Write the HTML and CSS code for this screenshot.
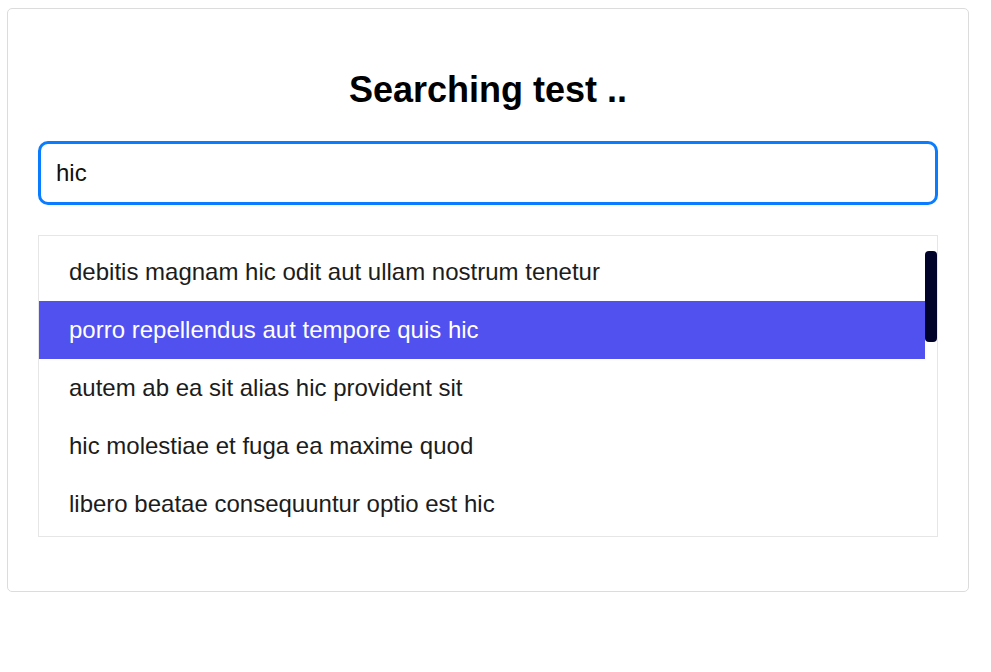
FILE: index.html
```html
<!DOCTYPE html>
<html>
<head>
<meta charset="utf-8">
<link rel="stylesheet" href="styles.css">
</head>
<body>
<div class="card">
  <h1 class="title">Searching test ..</h1>
  <input class="search" type="text" value="hic">
  <div class="results">
    <ul class="list">
      <li class="item">debitis magnam hic odit aut ullam nostrum tenetur</li>
      <li class="item active">porro repellendus aut tempore quis hic</li>
      <li class="item">autem ab ea sit alias hic provident sit</li>
      <li class="item">hic molestiae et fuga ea maxime quod</li>
      <li class="item">libero beatae consequuntur optio est hic</li>
    </ul>
    <div class="thumb"></div>
  </div>
</div>
</body>
</html>
```

FILE: styles.css
```css
html, body {
  margin: 0;
  padding: 0;
  background: #ffffff;
}
body {
  padding: 8px 0 0 7px;
  font-family: "Liberation Sans", Arial, sans-serif;
}
.card {
  width: 960px;
  height: 582px;
  border: 1px solid #dcdcdc;
  border-radius: 5px;
  display: flex;
  flex-direction: column;
  align-items: stretch;
}
.title {
  margin: 60px 0 0 0;
  font-size: 36px;
  line-height: 41px;
  font-weight: bold;
  text-align: center;
  color: #000;
}
.search {
  margin: 31px 30px 0 30px;
  height: 64px;
  box-sizing: border-box;
  border: 3px solid #0a7cff;
  border-radius: 10px;
  padding: 0 15px;
  font-family: "Liberation Sans", Arial, sans-serif;
  font-size: 24px;
  color: #111;
  outline: none;
}
.results {
  position: relative;
  margin: 30px 30px 0 30px;
  height: 300px;
  border: 1px solid #e6e6e6;
  overflow: hidden;
}
.list {
  list-style: none;
  margin: 0 12px 0 0;
  padding: 7px 0 0 0;
}
.item {
  height: 58px;
  line-height: 58px;
  padding-left: 30px;
  font-size: 24px;
  color: #1c1c1c;
  white-space: nowrap;
}
.item.active {
  background: #5051ef;
  color: #ffffff;
}
.thumb {
  position: absolute;
  top: 15px;
  right: 0;
  width: 12px;
  height: 91px;
  background: #02032a;
  border-radius: 4px;
}
```
